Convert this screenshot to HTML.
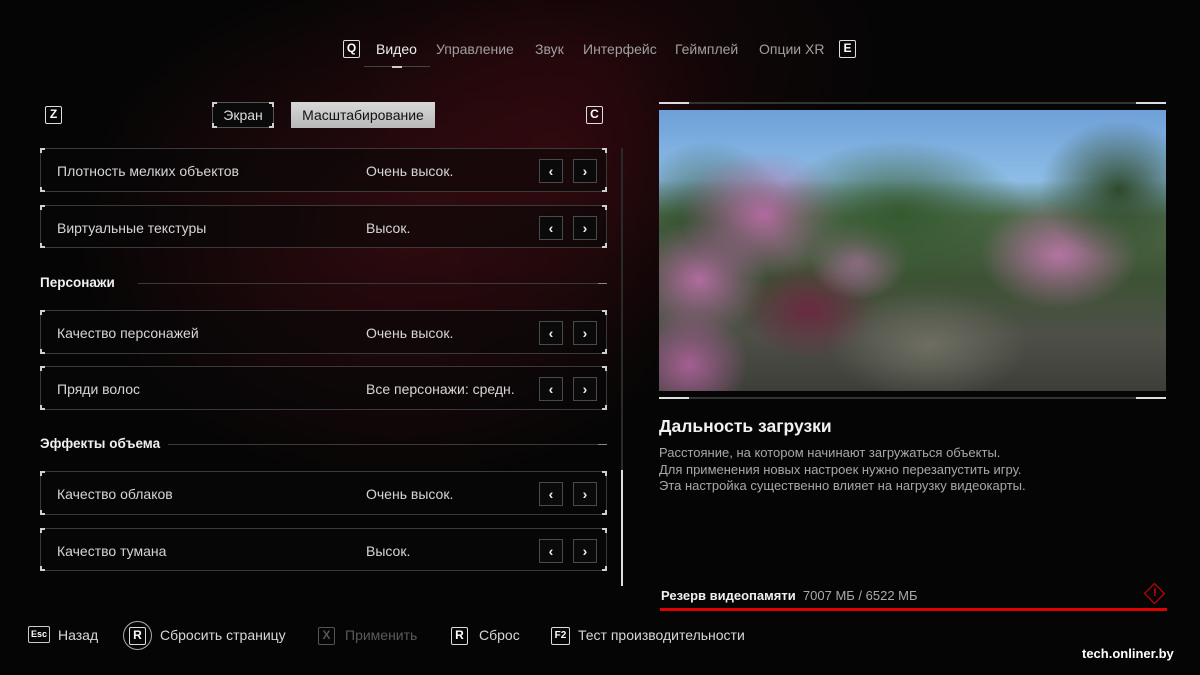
<!DOCTYPE html>
<html><head><meta charset="utf-8"><style>
*{margin:0;padding:0;box-sizing:border-box}
body{width:1200px;height:675px;overflow:hidden;background:#050505;font-family:"Liberation Sans",sans-serif;color:#d8d8d8;position:relative}
.bg{position:absolute;inset:0;background:radial-gradient(ellipse 330px 260px at 400px 230px,rgba(80,14,22,.55),rgba(0,0,0,0)),radial-gradient(ellipse 200px 200px at 560px 150px,rgba(70,10,18,.4),rgba(0,0,0,0)),radial-gradient(ellipse 300px 200px at 600px 60px,rgba(40,8,12,.5),rgba(0,0,0,0))}
.a{position:absolute}
.key{position:absolute;border:1.5px solid #ddd;border-radius:2px;color:#fff;font-size:12px;font-weight:bold;text-align:center;line-height:15px;width:17px;height:18px}
.nav{top:41px;font-size:14px;color:#a0a0a0}
.row{position:absolute;left:40px;width:567px;border:1px solid #3a3a3a;background:rgba(8,8,8,.55)}
.row:before,.row:after{content:"";position:absolute;width:5px;height:5px}
.c{position:absolute;width:5px;height:5px;border-color:#cfcfcf;border-style:solid}
.tl{left:-1px;top:-1px;border-width:2px 0 0 2px}.tr{right:-1px;top:-1px;border-width:2px 2px 0 0}
.bl{left:-1px;bottom:-1px;border-width:0 0 2px 2px}.br{right:-1px;bottom:-1px;border-width:0 2px 2px 0}
.row .l{position:absolute;left:16px;top:14px;font-size:14px;color:#d6d6d6}
.row .v{position:absolute;left:325px;top:14px;font-size:14px;color:#d6d6d6}
.btn{position:absolute;top:10px;width:24px;height:24px;border:1px solid #4a4a4a;background:#0a0a0a;color:#eee;font-size:14px;text-align:center;line-height:22px;font-weight:bold}
.sec{position:absolute;left:40px;font-size:13.5px;font-weight:bold;color:#f0f0f0}
.secl{position:absolute;height:1px;background:#3a3a3a}
.ft{position:absolute;top:627px;font-size:14px;color:#d8d8d8}
</style></head><body>
<div class="bg"></div>
<div class="key" style="left:343px;top:40px">Q</div>
<div class="a nav" style="left:376px;color:#eee">Видео</div>
<div class="a nav" style="left:436px">Управление</div>
<div class="a nav" style="left:535px">Звук</div>
<div class="a nav" style="left:583px">Интерфейс</div>
<div class="a nav" style="left:675px">Геймплей</div>
<div class="a nav" style="left:759px">Опции XR</div>
<div class="key" style="left:839px;top:40px">E</div>
<div class="a" style="left:364px;top:66px;width:66px;height:1px;background:#444"></div>
<div class="a" style="left:392px;top:66px;width:10px;height:2px;background:#ccc"></div>

<div class="key" style="left:45px;top:106px">Z</div>
<div class="a" style="left:212px;top:102px;width:62px;height:26px;border:1px solid #555;background:#0a0a0a;font-size:14px;text-align:center;line-height:24px;color:#ddd">Экран<span class="c tl"></span><span class="c tr"></span><span class="c bl"></span><span class="c br"></span></div>
<div class="a" style="left:291px;top:102px;width:144px;height:26px;background:linear-gradient(#d8d8d8,#b8b8b8);font-size:14px;text-align:center;line-height:26px;color:#111">Масштабирование</div>
<div class="key" style="left:586px;top:106px">C</div>

<div class="row" style="top:148px;height:44px"><span class="c tl"></span><span class="c tr"></span><span class="c bl"></span><span class="c br"></span><div class="l">Плотность мелких объектов</div><div class="v">Очень высок.</div><div class="btn" style="left:498px">‹</div><div class="btn" style="left:532px">›</div></div>
<div class="row" style="top:205px;height:43px"><span class="c tl"></span><span class="c tr"></span><span class="c bl"></span><span class="c br"></span><div class="l">Виртуальные текстуры</div><div class="v">Высок.</div><div class="btn" style="left:498px">‹</div><div class="btn" style="left:532px">›</div></div>
<div class="sec" style="top:275px">Персонажи</div><div class="secl" style="left:138px;top:283px;width:462px"></div><div class="secl" style="left:598px;top:283px;width:9px;background:#888"></div>
<div class="row" style="top:310px;height:44px"><span class="c tl"></span><span class="c tr"></span><span class="c bl"></span><span class="c br"></span><div class="l">Качество персонажей</div><div class="v">Очень высок.</div><div class="btn" style="left:498px">‹</div><div class="btn" style="left:532px">›</div></div>
<div class="row" style="top:366px;height:44px"><span class="c tl"></span><span class="c tr"></span><span class="c bl"></span><span class="c br"></span><div class="l">Пряди волос</div><div class="v">Все персонажи: средн.</div><div class="btn" style="left:498px">‹</div><div class="btn" style="left:532px">›</div></div>
<div class="sec" style="top:436px">Эффекты объема</div><div class="secl" style="left:168px;top:444px;width:432px"></div><div class="secl" style="left:598px;top:444px;width:9px;background:#888"></div>
<div class="row" style="top:471px;height:44px"><span class="c tl"></span><span class="c tr"></span><span class="c bl"></span><span class="c br"></span><div class="l">Качество облаков</div><div class="v">Очень высок.</div><div class="btn" style="left:498px">‹</div><div class="btn" style="left:532px">›</div></div>
<div class="row" style="top:528px;height:43px"><span class="c tl"></span><span class="c tr"></span><span class="c bl"></span><span class="c br"></span><div class="l">Качество тумана</div><div class="v">Высок.</div><div class="btn" style="left:498px">‹</div><div class="btn" style="left:532px">›</div></div>

<div class="a" style="left:621px;top:148px;width:2px;height:438px;background:#2a2a2a"></div>
<div class="a" style="left:621px;top:470px;width:2px;height:116px;background:#ddd"></div>

<div class="a" style="left:659px;top:102px;width:507px;height:2px;background:#333"></div>
<div class="a" style="left:659px;top:102px;width:30px;height:2px;background:#ddd"></div>
<div class="a" style="left:1136px;top:102px;width:30px;height:2px;background:#ddd"></div>
<div class="a" style="left:659px;top:397px;width:507px;height:2px;background:#333"></div>
<div class="a" style="left:659px;top:397px;width:30px;height:2px;background:#ddd"></div>
<div class="a" style="left:1136px;top:397px;width:30px;height:2px;background:#ddd"></div>
<div class="a" style="left:659px;top:110px;width:507px;height:281px;overflow:hidden;background:linear-gradient(#6ea0d8 0%,#8dbde6 25%,#4e6a48 38%,#3d5234 60%,#4e5048 80%,#3c3e38 100%)">
<div class="a" style="left:-40px;top:30px;width:180px;height:200px;border-radius:50%;background:radial-gradient(#2d4a2a,rgba(45,74,42,0) 70%)"></div>
<div class="a" style="left:20px;top:40px;width:170px;height:130px;border-radius:50%;background:radial-gradient(#b06a9e,rgba(150,80,130,0) 70%)"></div>
<div class="a" style="left:-30px;top:110px;width:140px;height:120px;border-radius:50%;background:radial-gradient(#b06c9e,rgba(150,80,130,0) 70%)"></div>
<div class="a" style="left:-30px;top:200px;width:120px;height:110px;border-radius:50%;background:radial-gradient(#a45f92,rgba(150,80,130,0) 70%)"></div>
<div class="a" style="left:80px;top:150px;width:140px;height:100px;border-radius:50%;background:radial-gradient(#6a2a40,rgba(100,40,60,0) 70%)"></div>
<div class="a" style="left:150px;top:110px;width:100px;height:80px;border-radius:50%;background:radial-gradient(#b072a4,rgba(150,80,130,0) 70%)"></div>
<div class="a" style="left:110px;top:30px;width:260px;height:150px;border-radius:50%;background:radial-gradient(#355a30,rgba(53,90,48,0) 70%)"></div>
<div class="a" style="left:320px;top:90px;width:160px;height:110px;border-radius:50%;background:radial-gradient(#b474a2,rgba(150,80,130,0) 70%)"></div>
<div class="a" style="left:380px;top:10px;width:160px;height:140px;border-radius:50%;background:radial-gradient(#2f4a2c,rgba(47,74,44,0) 70%)"></div>
<div class="a" style="left:170px;top:180px;width:200px;height:110px;border-radius:50%;background:radial-gradient(#6e6e62,rgba(110,110,98,0) 70%)"></div>
</div>

<div class="a" style="left:659px;top:416px;font-size:17.5px;font-weight:bold;color:#f2f2f2">Дальность загрузки</div>
<div class="a" style="left:659px;top:445px;font-size:13px;line-height:16.5px;color:#a8a8a8">Расстояние, на котором начинают загружаться объекты.<br>Для применения новых настроек нужно перезапустить игру.<br>Эта настройка существенно влияет на нагрузку видеокарты.</div>

<div class="a" style="left:661px;top:588px;font-size:13px;color:#f0f0f0;font-weight:bold">Резерв видеопамяти <span style="font-weight:normal;color:#aaa">&nbsp;7007 МБ / 6522 МБ</span></div>
<div class="a" style="left:1147px;top:586px;width:15px;height:15px;border:1.5px solid #e00;transform:rotate(45deg)"></div>
<div class="a" style="left:1149px;top:587px;width:12px;text-align:center;font-size:11px;font-weight:bold;color:#e00">!</div>
<div class="a" style="left:660px;top:608px;width:507px;height:3px;background:#e00000"></div>

<div class="a" style="left:28px;top:626px;width:22px;height:17px;border:1.5px solid #ccc;border-radius:2px;font-size:9px;font-weight:bold;text-align:center;line-height:14px;color:#fff">Esc</div>
<div class="ft" style="left:58px">Назад</div>
<div class="a" style="left:123px;top:621px;width:29px;height:29px;border:1.5px solid #aaa;border-radius:50%"></div>
<div class="key" style="left:129px;top:627px">R</div>
<div class="ft" style="left:160px">Сбросить страницу</div>
<div class="key" style="left:318px;top:627px;border-color:#555;color:#555">X</div>
<div class="ft" style="left:345px;color:#5a5a5a">Применить</div>
<div class="key" style="left:451px;top:627px">R</div>
<div class="ft" style="left:479px">Сброс</div>
<div class="key" style="left:551px;top:627px;font-size:10px;width:19px">F2</div>
<div class="ft" style="left:578px">Тест производительности</div>
<div class="a" style="left:1082px;top:646px;font-size:13px;font-weight:bold;color:#fff">tech.onliner.by</div>
</body></html>
